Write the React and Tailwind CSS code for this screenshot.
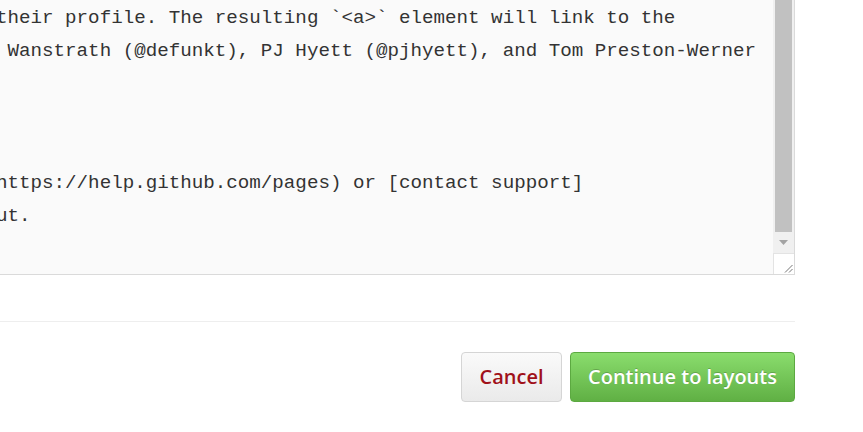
const LINES = [
  'their profile. The resulting `<a>` element will link to the',
  ' Wanstrath (@defunkt), PJ Hyett (@pjhyett), and Tom Preston-Werner',
  '',
  '',
  '',
  'https://help.github.com/pages) or [contact support]',
  'ut.',
]

export default function App() {
  return (
    <div className="w-[863px] h-[432px] bg-white overflow-hidden">
      <div className="w-[795px] flex flex-col">
        {/* Textarea */}
        <div className="h-[275px] flex border-r border-b border-[#dadada] bg-[#fafafa]">
          <div className="flex-1 overflow-hidden pt-[2px]">
            <pre className="-ml-[4px] font-['Liberation_Mono',monospace] text-[19.2px] leading-[33px] text-[#333]">
              {LINES.map((l, i) => (
                <div key={i} className="h-[33px] whitespace-pre">{l}</div>
              ))}
            </pre>
          </div>

          {/* Scrollbar */}
          <div className="w-[21px] flex flex-col bg-[#f0f0f0]">
            <div className="flex-1 pl-[2px] pr-[2px]">
              <div className="h-full bg-[#c1c1c1]" />
            </div>
            <div className="h-[21px] flex items-center justify-center">
              <svg width="9" height="5" viewBox="0 0 9 5">
                <path d="M0 0 H9 L4.5 5 Z" fill="#a3a3a3" />
              </svg>
            </div>
            <div className="h-[21px] bg-white border-l border-t border-[#e3e3e3] flex items-end justify-end p-[1px]">
              <svg width="9" height="9" viewBox="0 0 9 9">
                <path d="M8.5 1 L1 8.5 M8.5 5 L5 8.5" stroke="#777" strokeWidth="1" />
              </svg>
            </div>
          </div>
        </div>

        <div className="mt-[46px] h-px bg-[#eeeeee]" />

        {/* Buttons */}
        <div className="mt-[30px] flex justify-end gap-[8px] font-['Open_Sans',sans-serif]">
          <button className="w-[101px] h-[50px] rounded-[4px] border border-[#d5d5d5] bg-gradient-to-b from-[#fafafa] to-[#eaeaea] text-[#a0111a] text-[20px] font-semibold">
            Cancel
          </button>
          <button className="w-[225px] h-[50px] rounded-[4px] border border-[#5ca941] bg-gradient-to-b from-[#8add6d] to-[#60b044] text-white text-[20px] font-semibold [text-shadow:0_-1px_0_rgba(0,0,0,0.2)]">
            Continue to layouts
          </button>
        </div>
      </div>
    </div>
  )
}
